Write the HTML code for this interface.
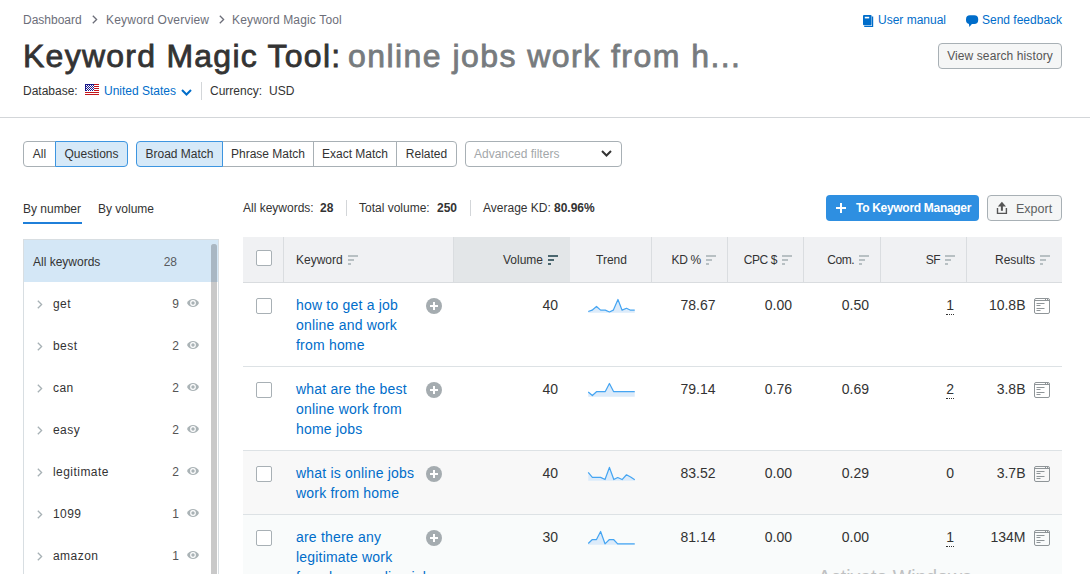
<!DOCTYPE html>
<html><head><meta charset="utf-8">
<style>
*{box-sizing:border-box;margin:0;padding:0}
html,body{width:1090px;height:574px;overflow:hidden;background:#fff;font-family:"Liberation Sans",sans-serif;color:#333;font-size:12px}
.a{position:absolute;white-space:nowrap}
.bc{color:#6c6e79;font-size:12px;line-height:14px}
.link{color:#006dca}
.btn{position:absolute;border:1px solid #a8b0b5;border-radius:4px;background:#f5f6f6;color:#333;font-size:12px;text-align:center}
.seg{position:absolute;top:141px;height:26px;border:1px solid #a8b0b5;background:#fff;font-size:12px;line-height:24px;text-align:center;color:#333}
.seg.on{background:#d6e9f8;border-color:#3d95e0;z-index:2}
.th{position:absolute;top:238px;height:45px;line-height:45px;font-size:12px;color:#333;white-space:nowrap}
.vl{position:absolute;top:237px;width:1px;height:45px;background:#dadde0}
.sort{display:inline-block;vertical-align:middle;margin-left:5px;line-height:0;position:relative;top:-1px}
.cb{position:absolute;width:16px;height:16px;border:1px solid #a8b0b5;border-radius:2px;background:#fff}
.kw{position:absolute;left:296px;color:#006dca;font-size:14px;line-height:20px;white-space:nowrap;letter-spacing:0.2px}
.num{position:absolute;font-size:14px;line-height:16px;color:#333;text-align:right;white-space:nowrap}
.sfu{border-bottom:1px dotted #333;padding-bottom:1px}
.si{position:absolute;font-size:12px;line-height:14px;color:#333;white-space:nowrap}
</style></head><body>

<!-- breadcrumb -->
<div class="a bc" style="left:23px;top:13px">Dashboard</div>
<div class="a" style="left:92px;top:15px;line-height:0"><svg width="6" height="9" viewBox="0 0 6 9"><path d="M0.8,0.8 L4.6,4.5 L0.8,8.2" fill="none" stroke="#6c6e79" stroke-width="1.3"/></svg></div>
<div class="a bc" style="left:106px;top:13px;letter-spacing:0.2px">Keyword Overview</div>
<div class="a" style="left:219px;top:15px;line-height:0"><svg width="6" height="9" viewBox="0 0 6 9"><path d="M0.8,0.8 L4.6,4.5 L0.8,8.2" fill="none" stroke="#6c6e79" stroke-width="1.3"/></svg></div>
<div class="a bc" style="left:232px;top:13px;letter-spacing:0.15px">Keyword Magic Tool</div>

<!-- top right links -->
<div class="a" style="left:863px;top:15px;line-height:0"><svg width="11" height="12" viewBox="0 0 11 12"><rect x="0" y="0" width="8.6" height="10.2" rx="1" fill="#006dca"/><path d="M9.6,1.4 V11.4 H1.2" fill="none" stroke="#006dca" stroke-width="1.2"/><rect x="1.8" y="1.8" width="4.4" height="1.6" fill="#fff"/></svg></div>
<div class="a link" style="left:878px;top:13px;line-height:14px">User manual</div>
<div class="a" style="left:966px;top:15px;line-height:0"><svg width="13" height="12" viewBox="0 0 13 12"><rect x="0" y="0.3" width="12.2" height="8.6" rx="4" fill="#006dca"/><path d="M2.6,7 L7.5,7 L3.4,12Z" fill="#006dca"/></svg></div>
<div class="a link" style="left:982px;top:13px;line-height:14px">Send feedback</div>

<!-- title -->
<div class="a" style="left:23px;top:38px;font-size:32px;line-height:37px;color:#333;letter-spacing:1.25px;-webkit-text-stroke:0.8px #333">Keyword Magic Tool:</div>
<div class="a" style="left:348px;top:38px;font-size:32px;line-height:37px;color:#777b7e;letter-spacing:1.45px;-webkit-text-stroke:0.8px #777b7e">online jobs work from h...</div>

<!-- database -->
<div class="a" style="left:23px;top:84px;line-height:14px">Database:</div>
<div class="a" style="left:85px;top:84px;line-height:0"><svg width="14" height="11" viewBox="0 0 14 11"><rect width="14" height="11" fill="#fff"/><rect y="0" width="14" height="1" fill="#c4161c"/><rect y="2" width="14" height="1" fill="#c4161c"/><rect y="4" width="14" height="1" fill="#c4161c"/><rect y="6" width="14" height="1" fill="#c4161c"/><rect y="8" width="14" height="1" fill="#c4161c"/><rect y="10" width="14" height="1" fill="#c4161c"/><rect width="9" height="7" fill="#1a1a8c"/><rect x="1" y="1" width="1" height="1" fill="#fff"/><rect x="3" y="1" width="1" height="1" fill="#fff"/><rect x="5" y="1" width="1" height="1" fill="#fff"/><rect x="7" y="1" width="1" height="1" fill="#fff"/><rect x="2" y="2" width="1" height="1" fill="#fff"/><rect x="4" y="2" width="1" height="1" fill="#fff"/><rect x="6" y="2" width="1" height="1" fill="#fff"/><rect x="8" y="2" width="1" height="1" fill="#fff"/><rect x="1" y="3" width="1" height="1" fill="#fff"/><rect x="3" y="3" width="1" height="1" fill="#fff"/><rect x="5" y="3" width="1" height="1" fill="#fff"/><rect x="7" y="3" width="1" height="1" fill="#fff"/><rect x="2" y="4" width="1" height="1" fill="#fff"/><rect x="4" y="4" width="1" height="1" fill="#fff"/><rect x="6" y="4" width="1" height="1" fill="#fff"/><rect x="8" y="4" width="1" height="1" fill="#fff"/><rect x="1" y="5" width="1" height="1" fill="#fff"/><rect x="3" y="5" width="1" height="1" fill="#fff"/><rect x="5" y="5" width="1" height="1" fill="#fff"/><rect x="7" y="5" width="1" height="1" fill="#fff"/><rect x="2" y="6" width="1" height="1" fill="#fff"/><rect x="4" y="6" width="1" height="1" fill="#fff"/><rect x="6" y="6" width="1" height="1" fill="#fff"/><rect x="8" y="6" width="1" height="1" fill="#fff"/></svg></div>
<div class="a link" style="left:104px;top:84px;line-height:14px">United States</div>
<div class="a" style="left:181px;top:89px;line-height:0"><svg width="11" height="7" viewBox="0 0 11 7"><path d="M1,1 L5.5,5.5 L10,1" fill="none" stroke="#006dca" stroke-width="2"/></svg></div>
<div class="a" style="left:201px;top:82px;width:1px;height:18px;background:#d3d6d9"></div>
<div class="a" style="left:210px;top:84px;line-height:14px">Currency:</div>
<div class="a" style="left:269px;top:84px;line-height:14px">USD</div>

<div class="btn" style="left:938px;top:43px;width:124px;height:26px;line-height:24px;color:#555;letter-spacing:0.1px">View search history</div>

<div class="a" style="left:0;top:117px;width:1090px;height:1px;background:#d3d6d9"></div>

<!-- segments -->
<div class="seg" style="left:23px;width:33px;border-radius:4px 0 0 4px">All</div>
<div class="seg on" style="left:55px;width:73px;border-radius:0 4px 4px 0">Questions</div>
<div class="seg on" style="left:136px;width:87px;border-radius:4px 0 0 4px">Broad Match</div>
<div class="seg" style="left:222px;width:92px">Phrase Match</div>
<div class="seg" style="left:313px;width:84px">Exact Match</div>
<div class="seg" style="left:396px;width:61px;border-radius:0 4px 4px 0">Related</div>
<div class="seg" style="left:465px;width:157px;border-radius:4px;text-align:left;padding-left:8px;color:#a3a7aa">Advanced filters</div>
<div class="a" style="left:601px;top:150px;line-height:0;z-index:3"><svg width="11" height="7" viewBox="0 0 11 7"><path d="M1,1 L5.5,5.5 L10,1" fill="none" stroke="#333" stroke-width="2"/></svg></div>

<!-- tabs -->
<div class="a" style="left:23px;top:202px;line-height:14px">By number</div>
<div class="a" style="left:23px;top:222px;width:59px;height:2px;background:#1f7fd9"></div>
<div class="a" style="left:98px;top:202px;line-height:14px">By volume</div>

<!-- stats -->
<div class="a" style="left:243px;top:201px;line-height:14px">All keywords:</div>
<div class="a" style="left:320px;top:201px;line-height:14px;font-weight:bold">28</div>
<div class="a" style="left:346px;top:200px;width:1px;height:16px;background:#d3d6d9"></div>
<div class="a" style="left:359px;top:201px;line-height:14px">Total volume:</div>
<div class="a" style="left:437px;top:201px;line-height:14px;font-weight:bold">250</div>
<div class="a" style="left:470px;top:200px;width:1px;height:16px;background:#d3d6d9"></div>
<div class="a" style="left:483px;top:201px;line-height:14px">Average KD:</div>
<div class="a" style="left:554px;top:201px;line-height:14px;font-weight:bold">80.96%</div>

<div class="a" style="left:826px;top:195px;width:153px;height:26px;background:#2e8fe1;border-radius:4px"></div>
<div class="a" style="left:836px;top:203px;line-height:0"><svg width="10" height="10" viewBox="0 0 10 10"><rect x="0" y="4" width="10" height="2" fill="#fff"/><rect x="4" y="0" width="2" height="10" fill="#fff"/></svg></div>
<div class="a" style="left:856px;top:201px;line-height:14px;color:#fff;font-weight:bold;font-size:12px;letter-spacing:-0.3px">To Keyword Manager</div>
<div class="btn" style="left:987px;top:195px;width:75px;height:26px"></div>
<div class="a" style="left:996px;top:201px;line-height:0"><svg width="12" height="14" viewBox="0 0 12 14"><path d="M5.9,0.8 L10,5.4 L1.8,5.4Z" fill="#555"/><rect x="4.9" y="5" width="2" height="4.8" fill="#555"/><path d="M1.5,7 V12.4 H10.4 V7" fill="none" stroke="#555" stroke-width="1.4"/></svg></div>
<div class="a" style="left:1016px;top:202px;line-height:14px;color:#5c5f62;font-size:12.5px">Export</div>

<!-- sidebar -->
<div class="a" style="left:23px;top:239px;width:196px;height:340px;border:1px solid #d8dee2;border-bottom:none"></div>
<div class="a" style="left:24px;top:240px;width:194px;height:42px;background:#d4e7f6"></div>
<div class="si" style="left:33px;top:255px">All keywords</div>
<div class="si" style="right:913px;top:255px;color:#585b5e">28</div>
<div class="a" style="left:37px;top:300px;line-height:0"><svg width="6" height="9" viewBox="0 0 6 9"><path d="M0.8,0.8 L4.6,4.5 L0.8,8.2" fill="none" stroke="#a7b1b5" stroke-width="1.3"/></svg></div>
<div class="si" style="left:53px;top:297px;letter-spacing:0.45px">get</div>
<div class="si" style="right:911px;top:297px;text-align:right;color:#555">9</div>
<div class="a" style="left:187px;top:299px;line-height:0"><svg width="12" height="8" viewBox="0 0 12 8"><path d="M0,4 C2.2,-1.2 9.8,-1.2 12,4 C9.8,9.2 2.2,9.2 0,4Z" fill="#aab3b6"/><circle cx="6" cy="4" r="2.9" fill="#fff"/><circle cx="6" cy="4" r="1.7" fill="#aab3b6"/></svg></div>
<div class="a" style="left:37px;top:342px;line-height:0"><svg width="6" height="9" viewBox="0 0 6 9"><path d="M0.8,0.8 L4.6,4.5 L0.8,8.2" fill="none" stroke="#a7b1b5" stroke-width="1.3"/></svg></div>
<div class="si" style="left:53px;top:339px;letter-spacing:0.45px">best</div>
<div class="si" style="right:911px;top:339px;text-align:right;color:#555">2</div>
<div class="a" style="left:187px;top:341px;line-height:0"><svg width="12" height="8" viewBox="0 0 12 8"><path d="M0,4 C2.2,-1.2 9.8,-1.2 12,4 C9.8,9.2 2.2,9.2 0,4Z" fill="#aab3b6"/><circle cx="6" cy="4" r="2.9" fill="#fff"/><circle cx="6" cy="4" r="1.7" fill="#aab3b6"/></svg></div>
<div class="a" style="left:37px;top:384px;line-height:0"><svg width="6" height="9" viewBox="0 0 6 9"><path d="M0.8,0.8 L4.6,4.5 L0.8,8.2" fill="none" stroke="#a7b1b5" stroke-width="1.3"/></svg></div>
<div class="si" style="left:53px;top:381px;letter-spacing:0.45px">can</div>
<div class="si" style="right:911px;top:381px;text-align:right;color:#555">2</div>
<div class="a" style="left:187px;top:383px;line-height:0"><svg width="12" height="8" viewBox="0 0 12 8"><path d="M0,4 C2.2,-1.2 9.8,-1.2 12,4 C9.8,9.2 2.2,9.2 0,4Z" fill="#aab3b6"/><circle cx="6" cy="4" r="2.9" fill="#fff"/><circle cx="6" cy="4" r="1.7" fill="#aab3b6"/></svg></div>
<div class="a" style="left:37px;top:426px;line-height:0"><svg width="6" height="9" viewBox="0 0 6 9"><path d="M0.8,0.8 L4.6,4.5 L0.8,8.2" fill="none" stroke="#a7b1b5" stroke-width="1.3"/></svg></div>
<div class="si" style="left:53px;top:423px;letter-spacing:0.45px">easy</div>
<div class="si" style="right:911px;top:423px;text-align:right;color:#555">2</div>
<div class="a" style="left:187px;top:425px;line-height:0"><svg width="12" height="8" viewBox="0 0 12 8"><path d="M0,4 C2.2,-1.2 9.8,-1.2 12,4 C9.8,9.2 2.2,9.2 0,4Z" fill="#aab3b6"/><circle cx="6" cy="4" r="2.9" fill="#fff"/><circle cx="6" cy="4" r="1.7" fill="#aab3b6"/></svg></div>
<div class="a" style="left:37px;top:468px;line-height:0"><svg width="6" height="9" viewBox="0 0 6 9"><path d="M0.8,0.8 L4.6,4.5 L0.8,8.2" fill="none" stroke="#a7b1b5" stroke-width="1.3"/></svg></div>
<div class="si" style="left:53px;top:465px;letter-spacing:0.45px">legitimate</div>
<div class="si" style="right:911px;top:465px;text-align:right;color:#555">2</div>
<div class="a" style="left:187px;top:467px;line-height:0"><svg width="12" height="8" viewBox="0 0 12 8"><path d="M0,4 C2.2,-1.2 9.8,-1.2 12,4 C9.8,9.2 2.2,9.2 0,4Z" fill="#aab3b6"/><circle cx="6" cy="4" r="2.9" fill="#fff"/><circle cx="6" cy="4" r="1.7" fill="#aab3b6"/></svg></div>
<div class="a" style="left:37px;top:510px;line-height:0"><svg width="6" height="9" viewBox="0 0 6 9"><path d="M0.8,0.8 L4.6,4.5 L0.8,8.2" fill="none" stroke="#a7b1b5" stroke-width="1.3"/></svg></div>
<div class="si" style="left:53px;top:507px;letter-spacing:0.45px">1099</div>
<div class="si" style="right:911px;top:507px;text-align:right;color:#555">1</div>
<div class="a" style="left:187px;top:509px;line-height:0"><svg width="12" height="8" viewBox="0 0 12 8"><path d="M0,4 C2.2,-1.2 9.8,-1.2 12,4 C9.8,9.2 2.2,9.2 0,4Z" fill="#aab3b6"/><circle cx="6" cy="4" r="2.9" fill="#fff"/><circle cx="6" cy="4" r="1.7" fill="#aab3b6"/></svg></div>
<div class="a" style="left:37px;top:552px;line-height:0"><svg width="6" height="9" viewBox="0 0 6 9"><path d="M0.8,0.8 L4.6,4.5 L0.8,8.2" fill="none" stroke="#a7b1b5" stroke-width="1.3"/></svg></div>
<div class="si" style="left:53px;top:549px;letter-spacing:0.45px">amazon</div>
<div class="si" style="right:911px;top:549px;text-align:right;color:#555">1</div>
<div class="a" style="left:187px;top:551px;line-height:0"><svg width="12" height="8" viewBox="0 0 12 8"><path d="M0,4 C2.2,-1.2 9.8,-1.2 12,4 C9.8,9.2 2.2,9.2 0,4Z" fill="#aab3b6"/><circle cx="6" cy="4" r="2.9" fill="#fff"/><circle cx="6" cy="4" r="1.7" fill="#aab3b6"/></svg></div>
<div class="a" style="left:211px;top:244px;width:6px;height:340px;background:#c9c9c9;border-radius:3px 3px 0 0"></div>
<div class="a" style="left:211px;top:244px;width:6px;height:38px;background:#a9b7c3;border-radius:3px 3px 0 0"></div>

<!-- table header -->
<div class="a" style="left:243px;top:237px;width:819px;height:46px;background:#f0f1f3;border-bottom:1px solid #d9dcdf"></div>
<div class="a" style="left:453px;top:237px;width:117px;height:45px;background:#e3e6e8;border-left:1px solid #dadde0"></div>
<div class="vl" style="left:283px"></div>
<div class="vl" style="left:651px"></div>
<div class="vl" style="left:727px"></div>
<div class="vl" style="left:803px"></div>
<div class="vl" style="left:880px"></div>
<div class="vl" style="left:966px"></div>
<div class="cb" style="left:256px;top:250px"></div>
<div class="th" style="left:296px">Keyword<span class="sort"><svg width="10" height="10" viewBox="0 0 10 10"><rect x="0" y="0" width="10" height="2" fill="#b8c0c3"/><rect x="0" y="4" width="6" height="2" fill="#b8c0c3"/><rect x="0" y="8" width="3" height="2" fill="#b8c0c3"/></svg></span></div>
<div class="th" style="right:532px">Volume<span class="sort"><svg width="10" height="10" viewBox="0 0 10 10"><rect x="0" y="0" width="10" height="2" fill="#4b676f"/><rect x="0" y="4" width="6" height="2" fill="#4b676f"/><rect x="0" y="8" width="3" height="2" fill="#4b676f"/></svg></span></div>
<div class="th" style="left:596px">Trend</div>
<div class="th" style="right:374px;letter-spacing:-0.3px">KD %<span class="sort"><svg width="10" height="10" viewBox="0 0 10 10"><rect x="0" y="0" width="10" height="2" fill="#b8c0c3"/><rect x="0" y="4" width="6" height="2" fill="#b8c0c3"/><rect x="0" y="8" width="3" height="2" fill="#b8c0c3"/></svg></span></div>
<div class="th" style="right:298px;letter-spacing:-0.4px">CPC $<span class="sort"><svg width="10" height="10" viewBox="0 0 10 10"><rect x="0" y="0" width="10" height="2" fill="#b8c0c3"/><rect x="0" y="4" width="6" height="2" fill="#b8c0c3"/><rect x="0" y="8" width="3" height="2" fill="#b8c0c3"/></svg></span></div>
<div class="th" style="right:221px;letter-spacing:-0.5px">Com.<span class="sort"><svg width="10" height="10" viewBox="0 0 10 10"><rect x="0" y="0" width="10" height="2" fill="#b8c0c3"/><rect x="0" y="4" width="6" height="2" fill="#b8c0c3"/><rect x="0" y="8" width="3" height="2" fill="#b8c0c3"/></svg></span></div>
<div class="th" style="right:135px;letter-spacing:-0.6px">SF<span class="sort"><svg width="10" height="10" viewBox="0 0 10 10"><rect x="0" y="0" width="10" height="2" fill="#b8c0c3"/><rect x="0" y="4" width="6" height="2" fill="#b8c0c3"/><rect x="0" y="8" width="3" height="2" fill="#b8c0c3"/></svg></span></div>
<div class="th" style="right:40px">Results<span class="sort"><svg width="10" height="10" viewBox="0 0 10 10"><rect x="0" y="0" width="10" height="2" fill="#b8c0c3"/><rect x="0" y="4" width="6" height="2" fill="#b8c0c3"/><rect x="0" y="8" width="3" height="2" fill="#b8c0c3"/></svg></span></div>

<div class="a" style="left:243px;top:283px;width:819px;height:84px;background:#fff;border-bottom:1px solid #dde2e5"></div>
<div class="cb" style="left:256px;top:298px"></div>
<div class="kw" style="top:295px">how to get a job<br>online and work<br>from home</div>
<div class="a" style="left:426px;top:298px;line-height:0"><svg width="16" height="16" viewBox="0 0 16 16"><circle cx="8" cy="8" r="8" fill="#a5acb0"/><rect x="4" y="7" width="8" height="2" fill="#fff"/><rect x="7" y="4" width="2" height="8" fill="#fff"/></svg></div>
<div class="num" style="right:532px;top:297px">40</div>
<div class="a" style="left:583px;top:292px;line-height:0"><svg width="60" height="26" viewBox="0 0 1090 472"><path d="M95,355 L165,330 L245,262 L320,330 L405,330 L480,362 L550,330 L635,135 L710,330 L790,295 L865,330 L940,330 L940,375 L95,375 Z" fill="#dcebfa"/><path d="M95,355 L165,330 L245,262 L320,330 L405,330 L480,362 L550,330 L635,135 L710,330 L790,295 L865,330 L940,330" fill="none" stroke="#45a5f2" stroke-width="22" stroke-linejoin="round"/></svg></div>
<div class="num" style="right:374.5px;top:297px">78.67</div>
<div class="num" style="right:298px;top:297px">0.00</div>
<div class="num" style="right:221px;top:297px">0.50</div>
<div class="num" style="right:136px;top:297px"><span class="sfu">1</span></div>
<div class="num" style="right:64.5px;top:297px">10.8B</div>
<div class="a" style="left:1034px;top:298px;line-height:0"><svg width="16" height="16" viewBox="0 0 16 16"><rect x="0.5" y="0.5" width="15" height="15" rx="1.5" fill="none" stroke="#8f9598"/><line x1="0" y1="2.5" x2="16" y2="2.5" stroke="#8f9598"/><line x1="11.5" y1="0" x2="11.5" y2="3" stroke="#8f9598"/><line x1="13.5" y1="0" x2="13.5" y2="3" stroke="#8f9598"/><rect x="2.5" y="5" width="8" height="1" fill="#8f9598"/><rect x="2.5" y="7" width="4" height="1" fill="#8f9598"/><rect x="2.5" y="10" width="8" height="1" fill="#8f9598"/><rect x="2.5" y="12" width="4" height="1" fill="#8f9598"/></svg></div>
<div class="a" style="left:243px;top:367px;width:819px;height:84px;background:#fff;border-bottom:1px solid #dde2e5"></div>
<div class="cb" style="left:256px;top:382px"></div>
<div class="kw" style="top:379px">what are the best<br>online work from<br>home jobs</div>
<div class="a" style="left:426px;top:382px;line-height:0"><svg width="16" height="16" viewBox="0 0 16 16"><circle cx="8" cy="8" r="8" fill="#a5acb0"/><rect x="4" y="7" width="8" height="2" fill="#fff"/><rect x="7" y="4" width="2" height="8" fill="#fff"/></svg></div>
<div class="num" style="right:532px;top:381px">40</div>
<div class="a" style="left:583px;top:376px;line-height:0"><svg width="60" height="26" viewBox="0 0 1090 472"><path d="M95,290 L170,355 L250,282 L320,282 L405,282 L480,135 L555,282 L630,282 L710,282 L790,282 L865,282 L940,282 L940,375 L95,375 Z" fill="#dcebfa"/><path d="M95,290 L170,355 L250,282 L320,282 L405,282 L480,135 L555,282 L630,282 L710,282 L790,282 L865,282 L940,282" fill="none" stroke="#45a5f2" stroke-width="22" stroke-linejoin="round"/></svg></div>
<div class="num" style="right:374.5px;top:381px">79.14</div>
<div class="num" style="right:298px;top:381px">0.76</div>
<div class="num" style="right:221px;top:381px">0.69</div>
<div class="num" style="right:136px;top:381px"><span class="sfu">2</span></div>
<div class="num" style="right:64.5px;top:381px">3.8B</div>
<div class="a" style="left:1034px;top:382px;line-height:0"><svg width="16" height="16" viewBox="0 0 16 16"><rect x="0.5" y="0.5" width="15" height="15" rx="1.5" fill="none" stroke="#8f9598"/><line x1="0" y1="2.5" x2="16" y2="2.5" stroke="#8f9598"/><line x1="11.5" y1="0" x2="11.5" y2="3" stroke="#8f9598"/><line x1="13.5" y1="0" x2="13.5" y2="3" stroke="#8f9598"/><rect x="2.5" y="5" width="8" height="1" fill="#8f9598"/><rect x="2.5" y="7" width="4" height="1" fill="#8f9598"/><rect x="2.5" y="10" width="8" height="1" fill="#8f9598"/><rect x="2.5" y="12" width="4" height="1" fill="#8f9598"/></svg></div>
<div class="a" style="left:243px;top:451px;width:819px;height:64px;background:#f8f8f8;border-bottom:1px solid #dde2e5"></div>
<div class="cb" style="left:256px;top:466px"></div>
<div class="kw" style="top:463px">what is online jobs<br>work from home</div>
<div class="a" style="left:426px;top:466px;line-height:0"><svg width="16" height="16" viewBox="0 0 16 16"><circle cx="8" cy="8" r="8" fill="#a5acb0"/><rect x="4" y="7" width="8" height="2" fill="#fff"/><rect x="7" y="4" width="2" height="8" fill="#fff"/></svg></div>
<div class="num" style="right:532px;top:465px">40</div>
<div class="a" style="left:583px;top:460px;line-height:0"><svg width="60" height="26" viewBox="0 0 1090 472"><path d="M95,225 L170,315 L250,315 L320,315 L400,355 L480,135 L560,355 L630,318 L710,355 L790,268 L865,310 L940,360 L940,375 L95,375 Z" fill="#dcebfa"/><path d="M95,225 L170,315 L250,315 L320,315 L400,355 L480,135 L560,355 L630,318 L710,355 L790,268 L865,310 L940,360" fill="none" stroke="#45a5f2" stroke-width="22" stroke-linejoin="round"/></svg></div>
<div class="num" style="right:374.5px;top:465px">83.52</div>
<div class="num" style="right:298px;top:465px">0.00</div>
<div class="num" style="right:221px;top:465px">0.29</div>
<div class="num" style="right:136px;top:465px"><span>0</span></div>
<div class="num" style="right:64.5px;top:465px">3.7B</div>
<div class="a" style="left:1034px;top:466px;line-height:0"><svg width="16" height="16" viewBox="0 0 16 16"><rect x="0.5" y="0.5" width="15" height="15" rx="1.5" fill="none" stroke="#8f9598"/><line x1="0" y1="2.5" x2="16" y2="2.5" stroke="#8f9598"/><line x1="11.5" y1="0" x2="11.5" y2="3" stroke="#8f9598"/><line x1="13.5" y1="0" x2="13.5" y2="3" stroke="#8f9598"/><rect x="2.5" y="5" width="8" height="1" fill="#8f9598"/><rect x="2.5" y="7" width="4" height="1" fill="#8f9598"/><rect x="2.5" y="10" width="8" height="1" fill="#8f9598"/><rect x="2.5" y="12" width="4" height="1" fill="#8f9598"/></svg></div>
<div class="a" style="left:243px;top:515px;width:819px;height:84px;background:#f9fbfb;border-bottom:1px solid #dde2e5"></div>
<div class="cb" style="left:256px;top:530px"></div>
<div class="kw" style="top:527px">are there any<br>legitimate work<br>from home online jobs</div>
<div class="a" style="left:426px;top:530px;line-height:0"><svg width="16" height="16" viewBox="0 0 16 16"><circle cx="8" cy="8" r="8" fill="#a5acb0"/><rect x="4" y="7" width="8" height="2" fill="#fff"/><rect x="7" y="4" width="2" height="8" fill="#fff"/></svg></div>
<div class="num" style="right:532px;top:529px">30</div>
<div class="a" style="left:583px;top:524px;line-height:0"><svg width="60" height="26" viewBox="0 0 1090 472"><path d="M95,355 L170,282 L245,282 L320,135 L400,360 L480,282 L555,282 L630,360 L710,360 L790,360 L865,360 L940,360 L940,375 L95,375 Z" fill="#dcebfa"/><path d="M95,355 L170,282 L245,282 L320,135 L400,360 L480,282 L555,282 L630,360 L710,360 L790,360 L865,360 L940,360" fill="none" stroke="#45a5f2" stroke-width="22" stroke-linejoin="round"/></svg></div>
<div class="num" style="right:374.5px;top:529px">81.14</div>
<div class="num" style="right:298px;top:529px">0.00</div>
<div class="num" style="right:221px;top:529px">0.00</div>
<div class="num" style="right:136px;top:529px"><span class="sfu">1</span></div>
<div class="num" style="right:64.5px;top:529px">134M</div>
<div class="a" style="left:1034px;top:530px;line-height:0"><svg width="16" height="16" viewBox="0 0 16 16"><rect x="0.5" y="0.5" width="15" height="15" rx="1.5" fill="none" stroke="#8f9598"/><line x1="0" y1="2.5" x2="16" y2="2.5" stroke="#8f9598"/><line x1="11.5" y1="0" x2="11.5" y2="3" stroke="#8f9598"/><line x1="13.5" y1="0" x2="13.5" y2="3" stroke="#8f9598"/><rect x="2.5" y="5" width="8" height="1" fill="#8f9598"/><rect x="2.5" y="7" width="4" height="1" fill="#8f9598"/><rect x="2.5" y="10" width="8" height="1" fill="#8f9598"/><rect x="2.5" y="12" width="4" height="1" fill="#8f9598"/></svg></div>
<div class="a" style="left:818px;top:566px;font-size:19.5px;line-height:22px;color:#bfc1c2;z-index:10">Activate Windows</div>

</body></html>
